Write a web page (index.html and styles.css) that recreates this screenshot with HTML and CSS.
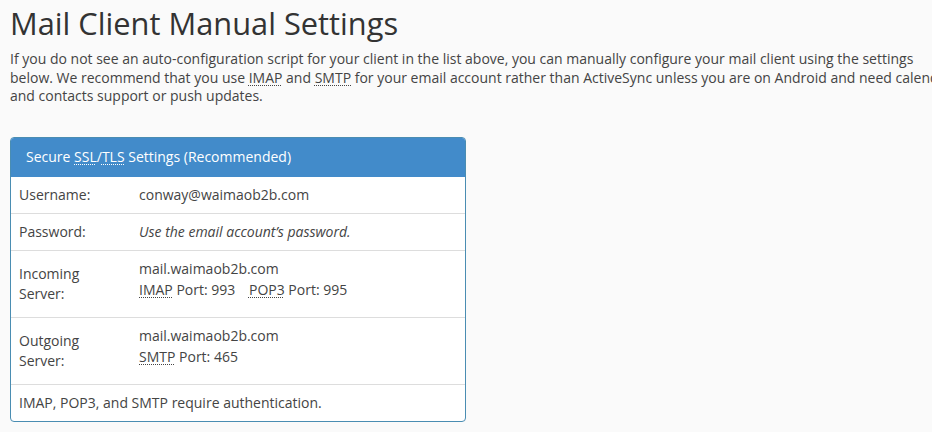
FILE: index.html
```html
<!DOCTYPE html>
<html lang="en">
<head>
<meta charset="utf-8">
<title>Mail Client Manual Settings</title>
<link rel="stylesheet" href="styles.css">
</head>
<body>
<div class="page">
  <h1 class="title">Mail Client Manual Settings</h1>
  <p class="intro">If you do not see an auto-configuration script for your client in the list above, you can manually configure your mail client using the settings below. We recommend that you use <abbr title="Internet Message Access Protocol">IMAP</abbr> and <abbr title="Simple Mail Transfer Protocol">SMTP</abbr> for your email account rather than ActiveSync unless you are on Android and need calendar and contacts support or push updates.</p>

  <div class="panel">
    <div class="panel-heading">Secure <abbr title="Secure Sockets Layer">SSL</abbr>/<abbr title="Transport Layer Security">TLS</abbr> Settings (Recommended)</div>
    <table class="settings">
      <tr>
        <td class="label">Username:</td>
        <td class="value">conway@waimaob2b.com</td>
      </tr>
      <tr>
        <td class="label">Password:</td>
        <td class="value"><em>Use the email account’s password.</em></td>
      </tr>
      <tr class="server">
        <td class="label">Incoming Server:</td>
        <td class="value">
          <div class="host">mail.waimaob2b.com</div>
          <div class="ports"><abbr title="Internet Message Access Protocol">IMAP</abbr> Port: 993 <span class="port-gap"><abbr title="Post Office Protocol 3">POP3</abbr> Port: 995</span></div>
        </td>
      </tr>
      <tr class="server">
        <td class="label">Outgoing Server:</td>
        <td class="value">
          <div class="host">mail.waimaob2b.com</div>
          <div class="ports"><abbr title="Simple Mail Transfer Protocol">SMTP</abbr> Port: 465</div>
        </td>
      </tr>
      <tr>
        <td class="note" colspan="2">IMAP, POP3, and SMTP require authentication.</td>
      </tr>
    </table>
  </div>
</div>
</body>
</html>
```

FILE: styles.css
```css
html, body {
  margin: 0;
  padding: 0;
  overflow: hidden;
  background: #fafafa;
}

body {
  font-family: "Open Sans", "DejaVu Sans", sans-serif;
  font-size: 14px;
  color: #333333;
}

.page {
  width: 948px;
  padding: 7px 10px 0;
}

.title {
  font-size: 30.8px;
  font-weight: 400;
  line-height: 33px;
  margin: 0 0 10px;
  color: #333333;
}

.intro {
  margin: 0;
  line-height: 18.5px;
  color: #444444;
}

abbr[title] {
  text-decoration: underline dotted;
  text-underline-offset: 2px;
  text-decoration-thickness: 1px;
  cursor: help;
}

.panel {
  width: 454px;
  margin-top: 31px;
  border: 1px solid #4a8db2;
  border-radius: 4px;
  background: #ffffff;
  overflow: hidden;
}

.panel-heading {
  background: #428bca;
  color: #ffffff;
  padding: 9px 15px 10px;
  line-height: 20px;
}

.panel-heading abbr[title] {
  text-decoration-color: #ffffff;
}

.settings {
  width: 100%;
  border-collapse: collapse;
}

.settings td {
  border-top: 1px solid #dddddd;
  padding: 8px;
  line-height: 20px;
  color: #444444;
}

.settings tr:first-child td {
  border-top: none;
}

.settings .label {
  width: 104px;
  vertical-align: middle;
}

.settings .value {
  vertical-align: top;
}

.server .value {
  padding-bottom: 17px;
}

.ports {
  line-height: 21px;
}

.port-gap {
  margin-left: 10px;
}

.note {
  vertical-align: middle;
}
```
